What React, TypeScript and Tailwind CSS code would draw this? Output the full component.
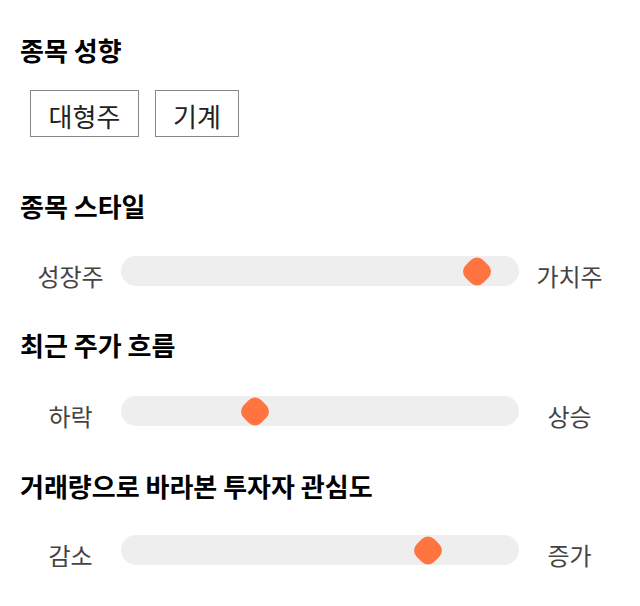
const font = { fontFamily: '"Noto Sans CJK KR", "Noto Sans", sans-serif' };

type SliderProps = { left: string; right: string; pos: number };

function Heading({ children }: { children: React.ReactNode }) {
  return <h2 className="text-[26px] leading-[30px] font-bold text-black">{children}</h2>;
}

function Slider({ left, right, pos }: SliderProps) {
  return (
    <div className="flex h-[30px] items-center">
      <span className="w-[101px] translate-y-[5px] text-center text-[24px] leading-[30px] text-[#444]">{left}</span>
      <div className="relative h-[30px] w-[398px] rounded-full bg-[#eeeeee]">
        <div
          className="absolute top-[2.5px] h-[25px] w-[25px] -translate-x-1/2 rotate-45 rounded-[9px] bg-[#ff743f]"
          style={{ left: pos }}
        />
      </div>
      <span className="w-[101px] translate-y-[5px] text-center text-[24px] leading-[30px] text-[#444]">{right}</span>
    </div>
  );
}

export default function App() {
  return (
    <div className="min-h-screen bg-white px-5 pt-[35px]" style={font}>
      <Heading>종목 성향</Heading>
      <div className="mt-[25px] ml-[10px] flex gap-4">
        <div className="flex h-[47px] w-[109px] items-center justify-center border border-[#888] pt-[4px] text-[26px] text-[#222]">대형주</div>
        <div className="flex h-[47px] w-[84px] items-center justify-center border border-[#888] pt-[4px] text-[26px] text-[#222]">기계</div>
      </div>

      <div className="mt-[54px]">
        <Heading>종목 스타일</Heading>
      </div>
      <div className="mt-[35px]">
        <Slider left="성장주" right="가치주" pos={356} />
      </div>

      <div className="mt-[44px]">
        <Heading>최근 주가 흐름</Heading>
      </div>
      <div className="mt-[36px]">
        <Slider left="하락" right="상승" pos={134} />
      </div>

      <div className="mt-[45px]">
        <Heading>거래량으로 바라본 투자자 관심도</Heading>
      </div>
      <div className="mt-[34px]">
        <Slider left="감소" right="증가" pos={307} />
      </div>
    </div>
  );
}
